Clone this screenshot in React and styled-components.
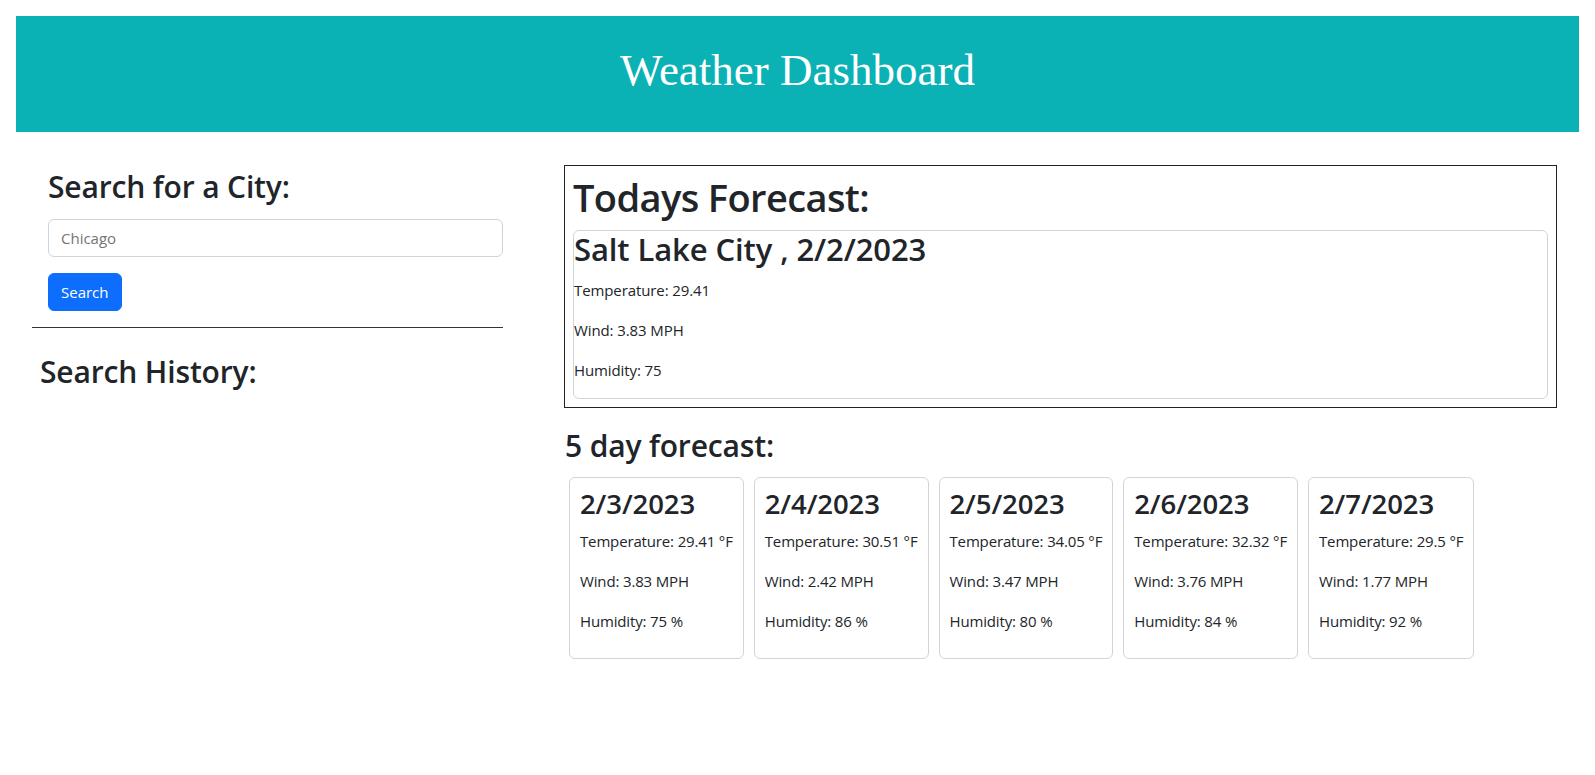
import React from "react";
import styled, { createGlobalStyle } from "styled-components";

const Global = createGlobalStyle`
  body {
    margin: 0;
    padding: 0;
    background: #fff;
    color: #212529;
    font-family: "Open Sans", "Noto Sans", sans-serif;
    font-size: 15px;
    line-height: 24px;
  }
  * {
    box-sizing: border-box;
  }
`;

const Page = styled.div`
  padding: 16px 16px 40px;
`;

const Header = styled.header`
  background: #0ab1b5;
  height: 116px;
  display: flex;
  align-items: center;
  justify-content: center;
  padding-bottom: 8px;

  h1 {
    margin: 0;
    color: #fff;
    font-family: "Liberation Serif", "Times New Roman", serif;
    font-weight: 400;
    font-size: 45px;
    line-height: 1.2;
  }
`;

const Main = styled.main`
  display: flex;
  align-items: flex-start;
  padding-left: 16px;
`;

const Sidebar = styled.aside`
  width: 471px;
  flex-shrink: 0;
  padding-top: 37px;
`;

const SearchForm = styled.form`
  padding-left: 16px;
  display: flex;
  flex-direction: column;
  align-items: flex-start;
`;

const Heading = styled.h3`
  margin: 0 0 ${({ gap }) => gap || 8}px;
  font-size: 30px;
  font-weight: 600;
  letter-spacing: -0.15px;
  line-height: 1.2;
  padding-left: ${({ indent }) => indent || 0}px;
`;

const Input = styled.input`
  width: 100%;
  height: 38px;
  margin-top: 6px;
  padding: 6px 12px;
  font-family: inherit;
  font-size: 15px;
  color: #212529;
  border: 1px solid #ced4da;
  border-radius: 6px;
  outline: none;

  ::placeholder {
    color: #6c757d;
  }
`;

const Button = styled.button`
  margin-top: 16px;
  height: 38px;
  padding: 6px 12px;
  font-family: inherit;
  font-size: 15px;
  color: #fff;
  background: #0d6efd;
  border: 1px solid #0d6efd;
  border-radius: 6px;
  cursor: pointer;
`;

const Rule = styled.hr`
  margin: 16px 0 26px;
  border: 0;
  border-top: 1px solid #333;
`;

const Content = styled.section`
  margin-left: 61px;
  flex: 0 0 993px;
  padding-top: 33px;
`;

const TodayBox = styled.div`
  border: 1px solid #222;
  padding: 8px;

  h1 {
    margin: 1px 0 9px;
    font-size: 38px;
    font-weight: 600;
    letter-spacing: -0.6px;
    line-height: 1.2;
  }
`;

const Card = styled.div`
  border: 1px solid #d3d4d5;
  border-radius: 6px;
  padding: ${({ pad }) => pad || "0"};

  h2 {
    margin: 0 0 ${({ titleGap }) => titleGap || 10}px;
    font-size: ${({ titleSize }) => titleSize || 31}px;
    font-weight: 600;
    letter-spacing: -0.1px;
    line-height: 1.2;
  }

  p {
    margin: 0 0 16px;
    letter-spacing: ${({ tight }) => (tight ? -0.15 : -0.1)}px;
  }
`;

const ForecastHeading = styled(Heading)`
  margin: 20px 0 13px 1px;
`;

const CardRow = styled.div`
  display: flex;
  gap: 10px;
  padding-left: 5px;
`;

const days = [
  { date: "2/3/2023", temp: "29.41", wind: "3.83", hum: "75" },
  { date: "2/4/2023", temp: "30.51", wind: "2.42", hum: "86" },
  { date: "2/5/2023", temp: "34.05", wind: "3.47", hum: "80" },
  { date: "2/6/2023", temp: "32.32", wind: "3.76", hum: "84" },
  { date: "2/7/2023", temp: "29.5", wind: "1.77", hum: "92" },
];

export default function App() {
  return (
    <Page>
      <Global />
      <Header>
        <h1>Weather Dashboard</h1>
      </Header>
      <Main>
        <Sidebar>
          <SearchForm onSubmit={(e) => e.preventDefault()}>
            <Heading>Search for a City:</Heading>
            <Input placeholder="Chicago" />
            <Button type="submit">Search</Button>
          </SearchForm>
          <Rule />
          <Heading indent={8}>Search History:</Heading>
        </Sidebar>
        <Content>
          <TodayBox>
            <h1>Todays Forecast:</h1>
            <Card>
              <h2>Salt Lake City , 2/2/2023</h2>
              <p>Temperature: 29.41</p>
              <p>Wind: 3.83 MPH</p>
              <p>Humidity: 75</p>
            </Card>
          </TodayBox>
          <ForecastHeading>5 day forecast:</ForecastHeading>
          <CardRow>
            {days.map((d) => (
              <Card key={d.date} pad="9px 10px" titleSize={27.5} titleGap={9} tight>
                <h2>{d.date}</h2>
                <p>Temperature: {d.temp} °F</p>
                <p>Wind: {d.wind} MPH</p>
                <p>Humidity: {d.hum} %</p>
              </Card>
            ))}
          </CardRow>
        </Content>
      </Main>
    </Page>
  );
}
